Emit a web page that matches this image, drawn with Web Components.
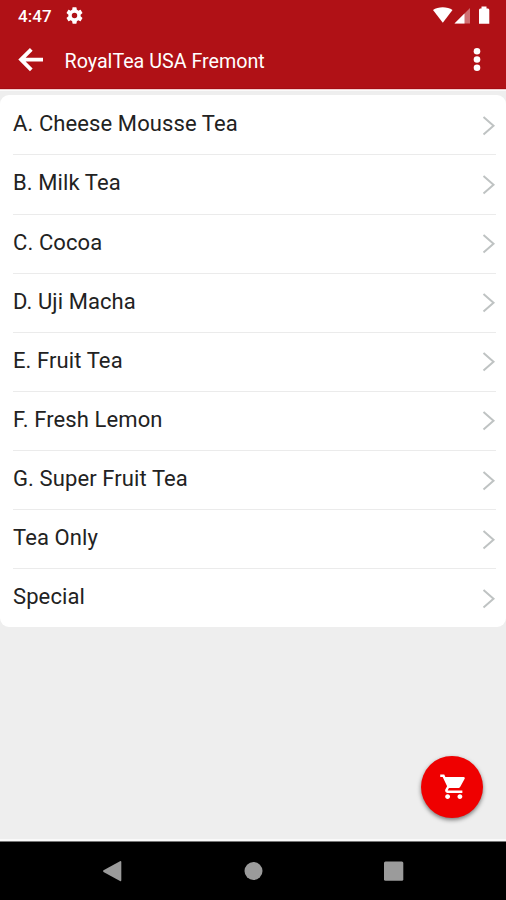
<!DOCTYPE html>
<html lang="en">
<head>
<meta charset="utf-8">
<title>RoyalTea USA Fremont</title>
<style>
html,body{margin:0;height:100%}
body{font-family:Roboto,"Liberation Sans",sans-serif;background:#eee;overflow:hidden}
</style>
</head>
<body>
<tea-screen>
  <status-bar slot="top" time="4:47"></status-bar>
  <app-bar slot="top">RoyalTea USA Fremont</app-bar>
  <menu-card>
    <menu-row>A. Cheese Mousse Tea</menu-row>
    <menu-row>B. Milk Tea</menu-row>
    <menu-row>C. Cocoa</menu-row>
    <menu-row>D. Uji Macha</menu-row>
    <menu-row>E. Fruit Tea</menu-row>
    <menu-row>F. Fresh Lemon</menu-row>
    <menu-row>G. Super Fruit Tea</menu-row>
    <menu-row>Tea Only</menu-row>
    <menu-row>Special</menu-row>
  </menu-card>
  <cart-button slot="fab"></cart-button>
  <nav-bar slot="bottom"></nav-bar>
</tea-screen>
<script>
const define = (name, html) => customElements.define(name, class extends HTMLElement {
  constructor() {
    super();
    const t = document.createElement('template');
    t.innerHTML = html;
    this.attachShadow({mode: 'open'}).append(t.content.cloneNode(true));
    const time = this.shadowRoot.querySelector('time');
    if (time) time.textContent = this.getAttribute('time');
  }
});

define('tea-screen', `
<style>
:host{display:flex;flex-direction:column;height:900px;width:506px;position:relative;background:#eee}
header{background:#b01116;flex:none;border-bottom:1px solid #f3cfcf;box-sizing:border-box;height:90px;box-shadow:inset 0 -1px #a40d13}
main{flex:1;padding-top:5px;box-shadow:inset 0 1px #fafafa, inset 0 -2px #f9f9f9}
.fab{position:absolute;left:421px;top:756px}
</style>
<header><slot name="top"></slot></header>
<main><slot></slot></main>
<div class="fab"><slot name="fab"></slot></div>
<slot name="bottom"></slot>`);

define('status-bar', `
<style>
:host{display:flex;height:31px;align-items:center;justify-content:space-between;color:#fff}
.l{display:flex;align-items:center;gap:14px;padding-left:18px}
time{font-size:17px;font-weight:500;line-height:20px;letter-spacing:.1px}
svg{display:block}
</style>
<div class="l"><time></time>
<svg width="17" height="17" viewBox="2 2 20 20" fill="#fff"><path d="M19.14 12.94c.04-.3.06-.61.06-.94 0-.32-.02-.64-.07-.94l2.03-1.58a.49.49 0 0 0 .12-.61l-1.92-3.32a.488.488 0 0 0-.59-.22l-2.39.96c-.5-.38-1.03-.7-1.62-.94l-.36-2.54a.484.484 0 0 0-.48-.41h-3.84c-.24 0-.43.17-.47.41l-.36 2.54c-.59.24-1.13.57-1.62.94l-2.39-.96c-.22-.08-.47 0-.59.22L2.74 8.87c-.12.21-.08.47.12.61l2.03 1.58c-.05.3-.09.63-.09.94s.02.64.07.94l-2.03 1.58a.49.49 0 0 0-.12.61l1.92 3.32c.12.22.37.29.59.22l2.39-.96c.5.38 1.03.7 1.62.94l.36 2.54c.05.24.24.41.48.41h3.84c.24 0 .44-.17.47-.41l.36-2.54c.59-.24 1.13-.56 1.62-.94l2.39.96c.22.08.47 0 .59-.22l1.92-3.32c.12-.22.07-.47-.12-.61l-2.01-1.58zM12 15.2A3.2 3.2 0 1 1 12 8.800a3.200 3.200 0 0 1 0 6.400z"/></svg></div>
<svg width="74" height="31" viewBox="432 0 74 31" fill="#fff">
<path d="M433 10C438 6.200 447.500 6.200 452.500 10L442.800 22.800Z"/>
<path d="M470 8V23.500H454.500Z" opacity=".4"/><path d="M464.500 13.500V23.500H454.500Z"/>
<path d="M481.500 6.500H486.500V8.500H488Q489.300 8.500 489.300 10V23.800H479V10Q479 8.500 480.300 8.500H481.500Z"/></svg>`);

define('app-bar', `
<style>
:host{display:flex;height:58px;align-items:center;color:#fff}
svg{display:block;flex:none}
h1{margin:3px 0 0 20.500px;flex:1;font-size:19.700px;font-weight:400;line-height:24px;white-space:nowrap}
.back{margin-left:17px}
.more{margin-right:22px}
</style>
<svg class="back" width="27" height="58" viewBox="17 31 27 58" fill="none" stroke="#fff" stroke-width="3.800"><path d="M43 59.600H21M31.300 49.400L21 59.600L31.300 69.800"/></svg>
<h1><slot></slot></h1>
<svg class="more" width="14" height="58" viewBox="470 31 14 58" fill="#fff"><circle cx="477" cy="51.300" r="3.300"/><circle cx="477" cy="59.500" r="3.300"/><circle cx="477" cy="67.700" r="3.300"/></svg>`);

define('menu-card', `
<style>
:host{display:block;background:#fff;border-radius:9px;height:532.300px;overflow:hidden}
</style><slot></slot>`);

define('menu-row', `
<style>
:host{display:flex;box-sizing:border-box;height:59.120px;margin:0 10px 0 13px;padding-top:1.200px;align-items:center;justify-content:space-between;border-bottom:1px solid #ebebeb;color:#222}
:host(:first-child){height:60.400px;padding-top:2.400px}
:host(:last-child){border-color:transparent}
span{font-size:22px;font-weight:400;line-height:28px;margin-top:-3.200px;letter-spacing:.1px;white-space:nowrap}
svg{display:block}
</style>
<span><slot></slot></span>
<svg width="14" height="22" viewBox="0 0 14 22" fill="none" stroke="#bfc3c3" stroke-width="2"><path d="M1.500 2L11.500 10.700L1.500 19.400"/></svg>`);

define('cart-button', `
<style>
:host{display:flex;width:62px;height:62px;border-radius:50%;background:#ef0000;align-items:center;justify-content:center;box-shadow:0 2px 4px rgba(0,0,0,.5)}
svg{display:block;margin-left:3px}
</style>
<svg width="29.500" height="29.500" viewBox="0 0 24 24" fill="#fff"><path d="M7 18c-1.100 0-1.990.9-1.990 2S5.900 22 7 22s2-.9 2-2-.9-2-2-2zM1 2v2h2l3.600 7.590-1.350 2.450c-.16.28-.25.61-.25.96 0 1.100.9 2 2 2h12v-2H7.420c-.14 0-.25-.11-.25-.25l.03-.12.900-1.630h7.450c.75 0 1.410-.41 1.750-1.030l3.580-6.490A1 1 0 0 0 20 4H5.210l-.94-2H1zm16 16c-1.100 0-1.990.9-1.990 2s.89 2 1.990 2 2-.9 2-2-.9-2-2-2z"/></svg>`);

define('nav-bar', `
<style>
:host{display:block;flex:none;height:58px;background:#000;border-top:1px solid #777}
svg{display:block}
</style>
<svg width="506" height="58" viewBox="0 842 506 58" fill="#9b9b9b"><path d="M103.500 870.200L120 861.200Q121.300 860.700 121.300 862V880Q121.300 881.700 120 881L103.500 872Q102.500 871 103.500 870.200Z"/><circle cx="253.500" cy="871" r="9"/><rect x="384" y="861.500" width="19.300" height="19.300" rx="1.500"/></svg>`);
</script>
</body>
</html>
